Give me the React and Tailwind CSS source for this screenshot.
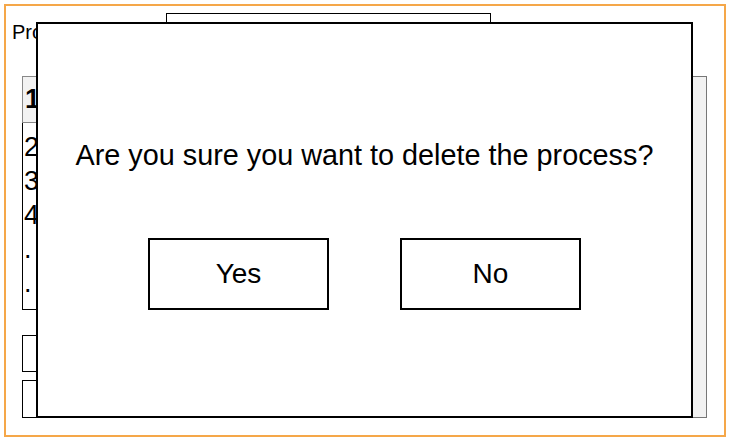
import React from "react";

export default function App() {
  const font = { fontFamily: '"Liberation Sans", Arial, sans-serif' };
  return (
    <div className="relative w-[730px] h-[442px] bg-white text-black" style={font}>
      <div className="absolute left-[4px] top-[4px] w-[722px] h-[433px] border-2 border-[#f5a749]">
        <div className="flex items-start mt-[7px]">
          <div className="w-[160px] h-[38px] pl-[6px] flex items-center text-[20px]">Process</div>
          <div className="w-[325px] h-[36px] border border-black bg-white"></div>
        </div>
        <div className="flex mt-[25px] ml-[16px]">
          <div className="flex flex-col w-[671px]">
            <div className="h-[47px] bg-[#f2f2f2] border border-[#888] flex items-center pl-[2px] text-[27px] font-bold">1</div>
            <div className="h-[187px] border border-black border-t-0 pl-[1px] pt-[7px] text-[27px] leading-[34px]">
              <div>2</div>
              <div>3</div>
              <div>4</div>
              <div>.</div>
              <div>.</div>
            </div>
            <div className="h-[37px] mt-[25px] border border-black"></div>
            <div className="h-[38px] mt-[8px] border border-black"></div>
          </div>
          <div className="w-[14px] bg-[#f2f2f2] border border-[#777] border-l-0"></div>
        </div>
      </div>

      <div className="absolute left-[36px] top-[22px] w-[657px] h-[396px] bg-white border-2 border-black flex flex-col items-center">
        <div className="mt-[114px] text-[28.8px] leading-[34px]">Are you sure you want to delete the process?</div>
        <div className="flex gap-[71px] mt-[66px]">
          <div className="w-[181px] h-[72px] border-2 border-black flex items-center justify-center text-[28px]">Yes</div>
          <div className="w-[181px] h-[72px] border-2 border-black flex items-center justify-center text-[28px]">No</div>
        </div>
      </div>
    </div>
  );
}
